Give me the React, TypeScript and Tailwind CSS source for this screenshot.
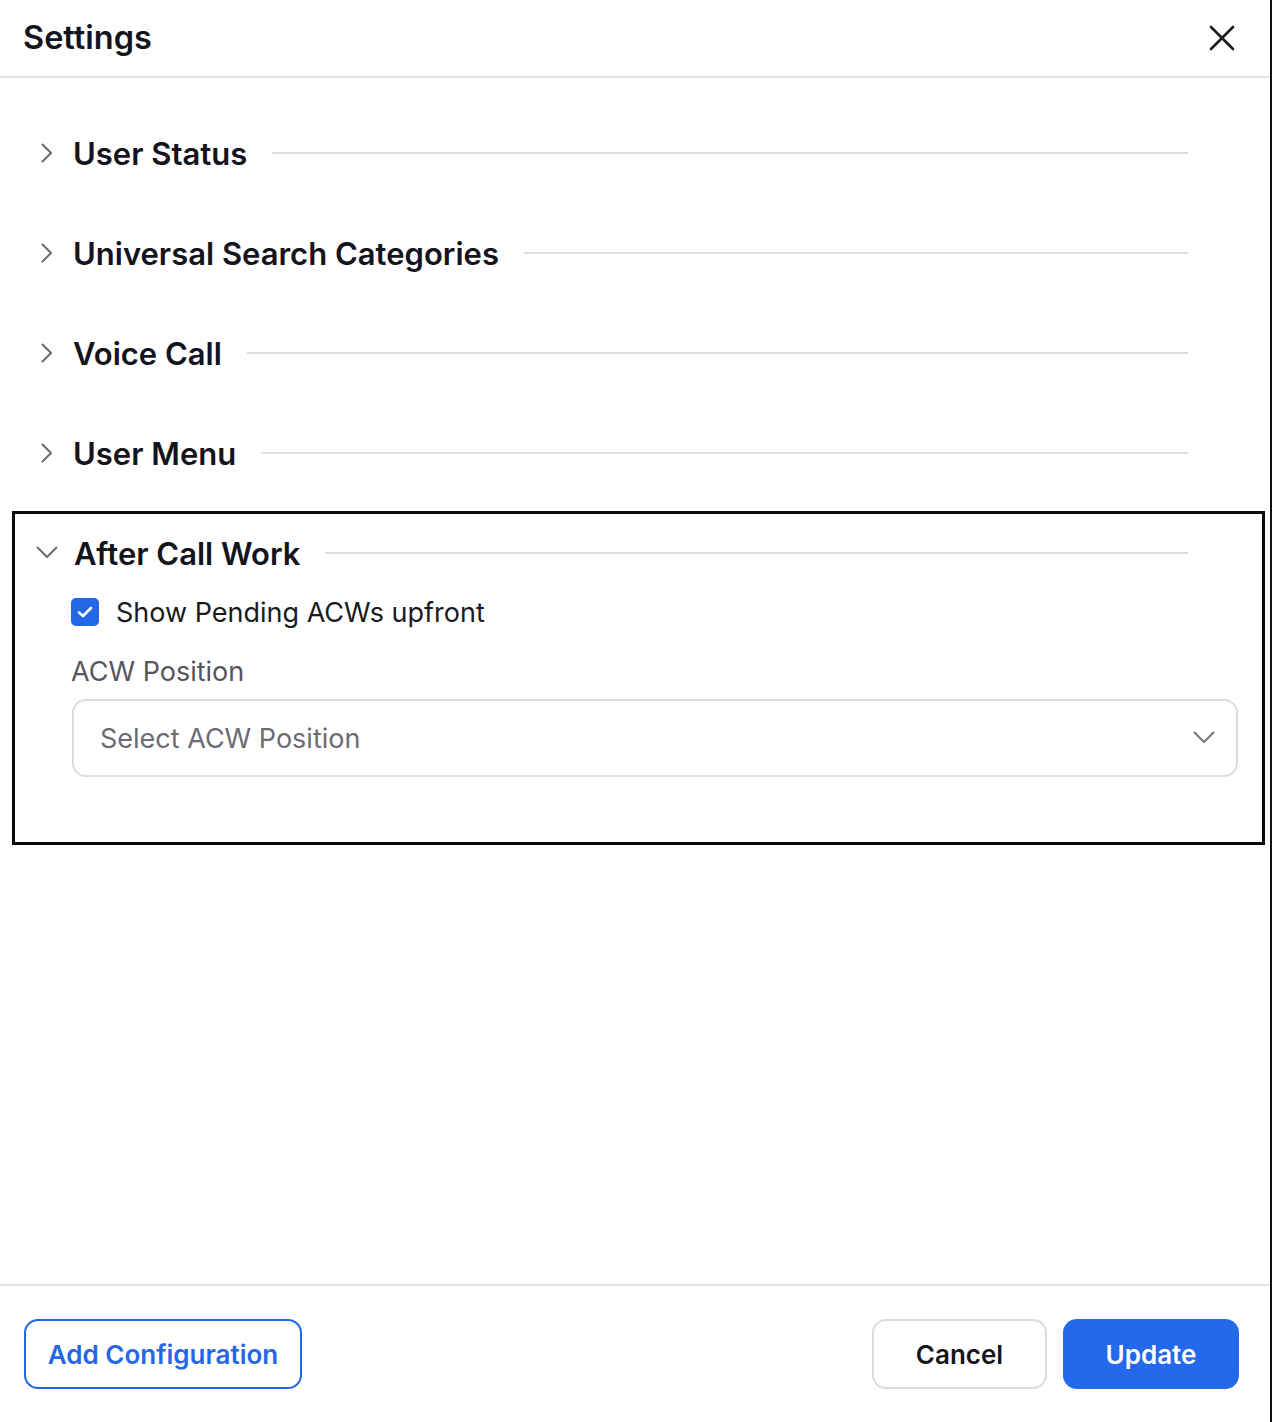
import React from "react";

const font = { fontFamily: "Inter, 'Noto Sans', sans-serif" };

function ChevronRight() {
  return (
    <svg width="12" height="20" viewBox="0 0 12 20" fill="none" className="shrink-0">
      <path d="M1.5 1.5 L10 10 L1.5 18.5" stroke="#6b6b74" strokeWidth="2" strokeLinecap="round" strokeLinejoin="round" />
    </svg>
  );
}

function ChevronDown({ color = "#6b6b74" }: { color?: string }) {
  return (
    <svg width="22" height="14" viewBox="0 0 22 14" fill="none" className="shrink-0">
      <path d="M1.5 1.5 L11 11 L20.5 1.5" stroke={color} strokeWidth="2" strokeLinecap="round" strokeLinejoin="round" />
    </svg>
  );
}

function Row({ title }: { title: string }) {
  return (
    <div className="flex h-[100px] items-center pl-[41px] pr-[82px]">
      <div className="flex w-[32px] shrink-0 items-center">
        <ChevronRight />
      </div>
      <span className="text-[31px] font-semibold leading-none text-[#14141c] whitespace-nowrap">{title}</span>
      <div className="ml-[25px] h-[2px] flex-1 bg-[#dedede]" />
    </div>
  );
}

export default function App() {
  return (
    <div className="flex h-[1422px] w-[1272px] flex-col border-r-2 border-[#111] bg-white" style={font}>
      <header className="flex h-[78px] shrink-0 items-center justify-between border-b-2 border-[#e6e6e6] pl-[23px] pr-[35px]">
        <h1 className="text-[32.5px] font-semibold leading-none text-[#14141c]">Settings</h1>
        <svg width="26" height="26" viewBox="0 0 26 26" fill="none">
          <path d="M2 2 L24 24 M24 2 L2 24" stroke="#1a1a1f" strokeWidth="2.6" strokeLinecap="round" />
        </svg>
      </header>
      <main className="flex-1 pt-[25px]">
        <Row title="User Status" />
        <Row title="Universal Search Categories" />
        <Row title="Voice Call" />
        <Row title="User Menu" />
        <div className="ml-[12px] mr-[5px] mt-[8px] border-[3px] border-[#0a0a0a] pb-[65px]">
          <div className="flex h-[78px] items-center pl-[21px] pr-[74px]">
            <div className="flex w-[38px] shrink-0 items-center">
              <ChevronDown />
            </div>
            <span className="text-[31px] font-semibold leading-none text-[#14141c] whitespace-nowrap">After Call Work</span>
            <div className="ml-[25px] h-[2px] flex-1 bg-[#dedede]" />
          </div>
          <div className="mt-[6px] flex h-[28px] items-center pl-[56px]">
            <div className="flex h-[28px] w-[28px] items-center justify-center rounded-[5px] bg-[#2466e8]">
              <svg width="16" height="12" viewBox="0 0 16 12" fill="none">
                <path d="M2 6.5 L6 10 L14 2" stroke="white" strokeWidth="2.6" strokeLinecap="round" strokeLinejoin="round" />
              </svg>
            </div>
            <span className="ml-[17px] text-[27px] leading-none text-[#1a1a20]">Show Pending ACWs upfront</span>
          </div>
          <div className="mt-[29px] pl-[56px] text-[27px] leading-[34px] text-[#55555e]">ACW Position</div>
          <div className="ml-[57px] mr-[24px] mt-[10px] flex h-[78px] items-center justify-between rounded-[14px] border-2 border-[#dddddd] pl-[26px] pr-[21px]">
            <span className="text-[27px] leading-none text-[#6b6b74]">Select ACW Position</span>
            <ChevronDown color="#767680" />
          </div>
        </div>
      </main>
      <footer className="flex h-[138px] shrink-0 items-center justify-between border-t-2 border-[#e6e6e6] pl-[24px] pr-[31px]">
        <button className="flex h-[70px] w-[278px] items-center justify-center rounded-[14px] border-2 border-[#2466e8] text-[26px] font-semibold text-[#2466e8]">
          Add Configuration
        </button>
        <div className="flex gap-[16px]">
          <button className="flex h-[70px] w-[175px] items-center justify-center rounded-[14px] border-2 border-[#dcdcdc] text-[26px] font-semibold text-[#14141c]">
            Cancel
          </button>
          <button className="flex h-[70px] w-[176px] items-center justify-center rounded-[14px] bg-[#2468eb] text-[26px] font-semibold text-white">
            Update
          </button>
        </div>
      </footer>
    </div>
  );
}
